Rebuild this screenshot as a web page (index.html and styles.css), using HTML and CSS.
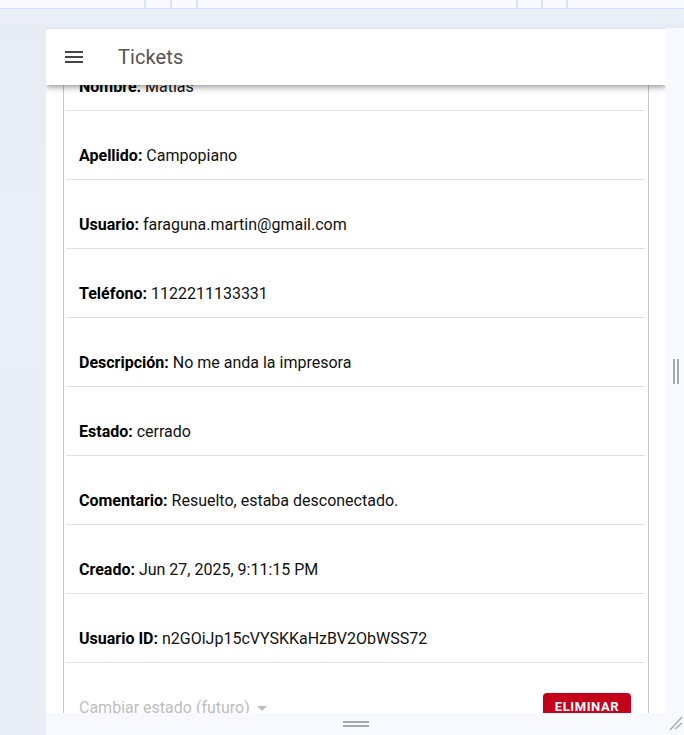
FILE: index.html
```html
<!DOCTYPE html>
<html lang="es">
<head>
<meta charset="utf-8">
<title>Tickets</title>
<link rel="stylesheet" href="styles.css">
</head>
<body>
<div class="app">
  <div class="topstrip">
    <span class="tick t1"></span><span class="tick t2"></span><span class="tick t3"></span>
    <span class="tick t4"></span><span class="tick t5"></span><span class="tick t6"></span>
  </div>
  <div class="stage">
    <div class="frame">
      <div class="frame-main">
        <div class="panel">
          <header class="appbar">
            <svg class="menu-icon" width="24" height="24" viewBox="0 0 24 24"><path d="M3 18h18v-2H3zm0-5h18v-2H3zm0-7v2h18V6z" fill="#444"/></svg>
            <span class="title">Tickets</span>
          </header>
          <div class="content">
            <div class="card">
              <div class="row"><b>Nombre:</b> Matias</div>
              <div class="row"><b>Apellido:</b> Campopiano</div>
              <div class="row"><b>Usuario:</b> faraguna.martin@gmail.com</div>
              <div class="row"><b>Teléfono:</b> 1122211133331</div>
              <div class="row"><b>Descripción:</b> No me anda la impresora</div>
              <div class="row"><b>Estado:</b> cerrado</div>
              <div class="row"><b>Comentario:</b> Resuelto, estaba desconectado.</div>
              <div class="row"><b>Creado:</b> Jun 27, 2025, 9:11:15 PM</div>
              <div class="row"><b>Usuario ID:</b> n2GOiJp15cVYSKKaHzBV2ObWSS72</div>
              <div class="actions">
                <div class="select">Cambiar estado (futuro)<span class="caret"></span></div>
                <button class="btn-delete">ELIMINAR</button>
              </div>
            </div>
          </div>
        </div>
        <div class="rail"><span class="vhandle"></span></div>
      </div>
      <div class="bottombar">
        <div class="bottom-center"><span class="hhandle"></span></div>
        <div class="grip">
          <svg width="18" height="22" viewBox="0 0 18 22"><path d="M16 4 L4 17 M16 10 L9 16" stroke="#a8a8a8" stroke-width="1.4" fill="none"/></svg>
        </div>
      </div>
    </div>
  </div>
</div>
</body>
</html>
```

FILE: styles.css
```css
* { box-sizing: border-box; }
html, body { margin: 0; padding: 0; }
body {
  width: 684px;
  height: 735px;
  overflow: hidden;
  font-family: Roboto, "Noto Sans", Arial, sans-serif;
  background: #eaeef6;
}
.app { width: 684px; height: 735px; display: flex; flex-direction: column; }

.topstrip {
  height: 9px;
  flex: none;
  background: #f8faff;
  border-bottom: 1px solid #d3e2fa;
  display: flex;
}
.tick { width: 2px; height: 8px; background: #d6e4fb; display: block; }
.t1 { margin-left: 144px; }
.t2 { margin-left: 24px; }
.t3 { margin-left: 24px; }
.t4 { margin-left: 318px; }
.t5 { margin-left: 23px; }
.t6 { margin-left: 23px; }

.stage {
  flex: 1;
  background: linear-gradient(180deg, #edf1f9 0px, #e7ebf3 20px, #eaeef6 200px, #e9edf5 100%);
  padding-top: 19px;
  padding-left: 46px;
  display: flex;
  min-height: 0;
}
.frame { width: 638px; display: flex; flex-direction: column; min-height: 0; }
.frame-main { flex: 1; display: flex; min-height: 0; }

.panel {
  width: 620px;
  background: #fff;
  border-top: 1px solid #dfe2e8;
  display: flex;
  flex-direction: column;
  overflow: hidden;
}
.appbar {
  height: 56px;
  flex: none;
  display: flex;
  align-items: center;
  padding-left: 16px;
  background: #fff;
  position: relative;
  z-index: 1;
  box-shadow: 0 2px 4px -1px rgba(0,0,0,0.2), 0 4px 5px 0 rgba(0,0,0,0.14), 0 1px 10px 0 rgba(0,0,0,0.12);
}
.menu-icon { display: block; flex: none; }
.title {
  margin-left: 32px;
  font-size: 20px;
  color: #555;
  font-weight: 400;
  letter-spacing: 0.1px;
}

.content { flex: 1; padding: 0 17px; min-height: 0; }
.card {
  margin-top: -43px;
  border-left: 1px solid #c8c8c8;
  border-right: 1px solid #c8c8c8;
  padding: 0 3px 0 2px;
  height: 800px;
}
.row {
  height: 69px;
  padding: 36px 0 0 13px;
  border-bottom: 1px solid #e0e0e0;
  font-size: 16px;
  line-height: 18px;
  color: #111;
  white-space: nowrap;
}
.row b { font-weight: 700; color: #000; }

.actions {
  display: flex;
  align-items: flex-start;
  justify-content: space-between;
  padding: 30px 14px 0 13px;
}
.select {
  font-size: 16px;
  line-height: 18px;
  color: #bdbdbd;
  display: flex;
  align-items: center;
  margin-top: 6px;
}
.caret {
  margin-left: 7px;
  width: 0; height: 0;
  border-left: 5px solid transparent;
  border-right: 5px solid transparent;
  border-top: 5px solid #bdbdbd;
}
.btn-delete {
  height: 30px;
  width: 88px;
  border: 0;
  border-radius: 4px;
  background: #c4001b;
  color: #fff;
  font-family: Roboto, Arial, sans-serif;
  font-weight: 700;
  font-size: 13px;
  line-height: 15px;
  letter-spacing: 0.6px;
  padding: 0 0 4px 0;
  box-shadow: 0 2px 2px rgba(0,0,0,0.15);
}

.rail {
  width: 18px;
  background: #f7f9fe;
  display: flex;
  align-items: center;
  justify-content: center;
}
.vhandle {
  width: 6px;
  height: 25px;
  border-left: 2px solid #a8a8a8;
  border-right: 2px solid #a8a8a8;
  margin-left: 2px;
  margin-top: 2px;
}

.bottombar {
  height: 22px;
  flex: none;
  background: #f7f9fe;
  display: flex;
}
.bottom-center {
  width: 620px;
  display: flex;
  justify-content: center;
  padding-top: 8px;
}
.hhandle {
  width: 26px;
  height: 6px;
  border-top: 2px solid #a8a8a8;
  border-bottom: 2px solid #a8a8a8;
}
.grip { width: 18px; }
.grip svg { display: block; }
```
